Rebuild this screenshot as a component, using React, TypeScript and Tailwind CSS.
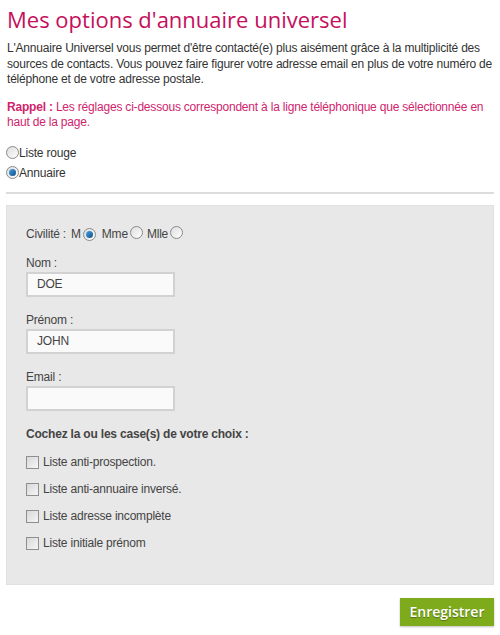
import React from "react";

const Radio = ({ checked }: { checked?: boolean }) => (
  <span className="inline-flex h-[13px] w-[13px] shrink-0 items-center justify-center rounded-full border border-[#8a8a8a] bg-gradient-to-br from-[#dcdcdc] to-white">
    {checked && <span className="h-[7px] w-[7px] rounded-full bg-gradient-to-br from-[#4aa3e0] to-[#0d4f8c]" />}
  </span>
);

const Checkbox = () => (
  <span className="inline-block h-[13px] w-[13px] shrink-0 border border-[#8f8f8f] bg-gradient-to-br from-[#d8d8d8] to-[#f6f6f6]" />
);

const Field = ({ label, value, top }: { label: string; value: string; top: string }) => (
  <div className={top}>
    <p className="leading-[15px]">{label}</p>
    <div className="mt-[1px] h-[25px] w-[149px] border-2 border-[#d2d2d2] bg-[#fafafa] px-[9px] text-[12px] leading-[21px] text-[#444]">
      {value}
    </div>
  </div>
);

const options = [
  "Liste anti-prospection.",
  "Liste anti-annuaire inversé.",
  "Liste adresse incomplète",
  "Liste initiale prénom",
];

export default function App() {
  return (
    <div className="w-[500px] h-[635px] bg-white px-[6px] font-['Liberation_Sans',Arial,sans-serif] text-[12px] tracking-[-0.2px] text-[#333]">
      <h1 className="pl-[1px] pt-[5px] font-['Open_Sans',sans-serif] text-[22px] leading-[28px] tracking-normal text-[#c5105c]">
        Mes options d'annuaire universel
      </h1>
      <p className="mt-[8px] pl-[1px] leading-[15.5px]">
        L'Annuaire Universel vous permet d'être contacté(e) plus aisément grâce à la multiplicité des sources de contacts. Vous pouvez faire figurer votre adresse email en plus de votre numéro de téléphone et de votre adresse postale.
      </p>
      <p className="mt-[12px] pl-[1px] leading-[15.5px] text-[#d0246e]">
        <span className="font-bold">Rappel :</span> Les réglages ci-dessous correspondent à la ligne téléphonique que sélectionnée en haut de la page.
      </p>
      <div className="mt-[15px] flex flex-col gap-[6px]">
        <label className="flex h-[14px] items-center">
          <Radio />
          <span>Liste rouge</span>
        </label>
        <label className="flex h-[14px] items-center">
          <Radio checked />
          <span>Annuaire</span>
        </label>
      </div>
      <hr className="mt-[12px] border-t-2 border-[#dcdcdc]" />
      <div className="mt-[11px] h-[380px] border border-[#e1e1e1] bg-[#e8e8e8] pl-[19px] pt-[20px] text-[#444]">
        <div className="flex items-center leading-[15px]">
          <span>Civilité :</span>
          <span className="ml-[5px]">M</span>
          <span className="ml-[2px]"><Radio checked /></span>
          <span className="ml-[6px]">Mme</span>
          <span className="ml-[2px]"><Radio /></span>
          <span className="ml-[4px]">Mlle</span>
          <span className="ml-[2px]"><Radio /></span>
        </div>
        <Field label="Nom :" value="DOE" top="mt-[13px]" />
        <Field label="Prénom :" value="JOHN" top="mt-[16px]" />
        <Field label="Email :" value="" top="mt-[16px]" />
        <p className="mt-[16px] font-bold leading-[15px]">Cochez la ou les case(s) de votre choix :</p>
        <ul className="mt-[13px] flex flex-col gap-[12px]">
          {options.map((o) => (
            <li key={o} className="flex h-[15px] items-center gap-[4px]">
              <Checkbox />
              <span>{o}</span>
            </li>
          ))}
        </ul>
      </div>
      <div className="mt-[13px] flex justify-end">
        <button className="h-[28px] w-[94px] bg-[#7eab1b] font-['Open_Sans',sans-serif] text-[14px] font-semibold tracking-normal text-white [text-shadow:0_1px_1px_rgba(0,0,0,0.35)] shadow-[0_1px_2px_rgba(0,0,0,0.25)]">
          Enregistrer
        </button>
      </div>
    </div>
  );
}
